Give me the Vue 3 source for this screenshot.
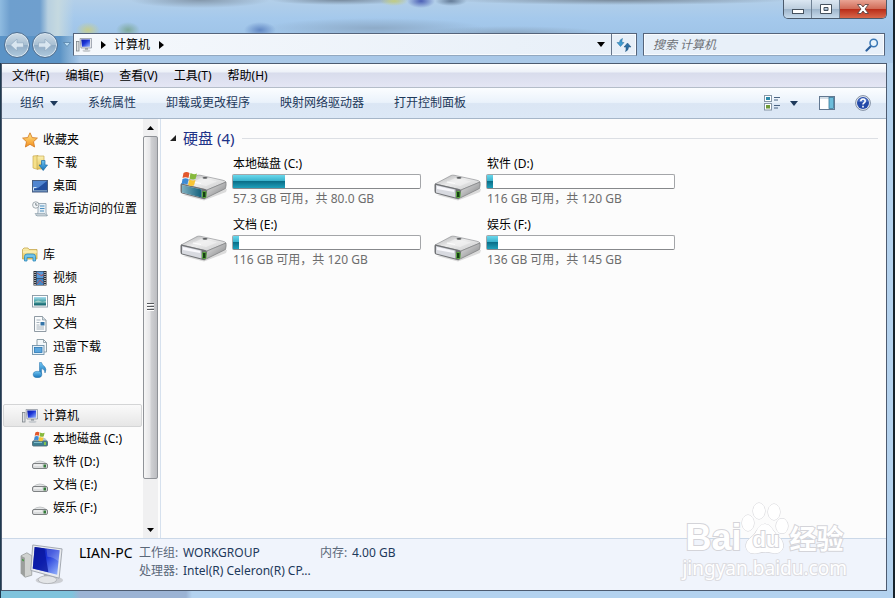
<script setup>
import { ref } from 'vue'

const search = ref('')
const selected = ref('计算机')
const open = ref(true)

const menus = ['文件(F)', '编辑(E)', '查看(V)', '工具(T)', '帮助(H)']
const actions = ['系统属性', '卸载或更改程序', '映射网络驱动器', '打开控制面板']

const groups = [
  {
    name: '收藏夹',
    icon: 'star',
    items: [
      { name: '下载', icon: 'download' },
      { name: '桌面', icon: 'desktop' },
      { name: '最近访问的位置', icon: 'recent' }
    ]
  },
  {
    name: '库',
    icon: 'library',
    items: [
      { name: '视频', icon: 'video' },
      { name: '图片', icon: 'picture' },
      { name: '文档', icon: 'document' },
      { name: '迅雷下载', icon: 'thunder' },
      { name: '音乐', icon: 'music' }
    ]
  },
  {
    name: '计算机',
    icon: 'computer',
    items: [
      { name: '本地磁盘 (C:)', icon: 'system' },
      { name: '软件 (D:)', icon: 'disk' },
      { name: '文档 (E:)', icon: 'disk' },
      { name: '娱乐 (F:)', icon: 'disk' }
    ]
  }
]

const drives = [
  { name: '本地磁盘 (C:)', info: '57.3 GB 可用，共 80.0 GB', used: 28, system: true },
  { name: '软件 (D:)', info: '116 GB 可用，共 120 GB', used: 3 },
  { name: '文档 (E:)', info: '116 GB 可用，共 120 GB', used: 3 },
  { name: '娱乐 (F:)', info: '136 GB 可用，共 145 GB', used: 6 }
]
</script>

<template>
  <div class="frame">
    <!-- shared icon shapes -->
    <svg class="defs" aria-hidden="true">
      <defs>
        <linearGradient id="gScreen" x1="0" y1="0" x2="1" y2="1">
          <stop offset="0" stop-color="#0a1a9c" />
          <stop offset=".45" stop-color="#1c35d8" />
          <stop offset="1" stop-color="#9dbcff" />
        </linearGradient>
        <linearGradient id="gTop" x1="0" y1="0" x2="1" y2="1">
          <stop offset="0" stop-color="#a9aaac" />
          <stop offset=".45" stop-color="#ececec" />
          <stop offset="1" stop-color="#c8c9ca" />
        </linearGradient>
        <linearGradient id="gSide" x1="0" y1="0" x2="1" y2="1">
          <stop offset="0" stop-color="#ececec" />
          <stop offset="1" stop-color="#7c7d7f" />
        </linearGradient>
        <linearGradient id="gTeal" x1="0" y1="0" x2="1" y2="0">
          <stop offset="0" stop-color="#7fb0c0" />
          <stop offset="1" stop-color="#14617c" />
        </linearGradient>
        <linearGradient id="gFolder" x1="0" y1="0" x2="0" y2="1">
          <stop offset="0" stop-color="#fbf0b0" />
          <stop offset="1" stop-color="#e2c35a" />
        </linearGradient>
        <linearGradient id="gBlue" x1="0" y1="0" x2="0" y2="1">
          <stop offset="0" stop-color="#6fc4f2" />
          <stop offset="1" stop-color="#1673b8" />
        </linearGradient>
        <linearGradient id="gStar" x1="0" y1="0" x2="0" y2="1">
          <stop offset="0" stop-color="#ffe98a" />
          <stop offset="1" stop-color="#f58e1c" />
        </linearGradient>
        <linearGradient id="gPhoto" x1="0" y1="0" x2="0" y2="1">
          <stop offset="0" stop-color="#a8dcf0" />
          <stop offset=".5" stop-color="#4aa5a8" />
          <stop offset="1" stop-color="#135f6a" />
        </linearGradient>
      </defs>
      <symbol id="flag" viewBox="0 0 16 16">
        <path d="M2 2Q5 0 8 2L7 7Q4 5.500 1 7Z" fill="#e2572b" />
        <path d="M9 2Q12 4 15.500 2.500L14 8Q11 9 8 7.500Z" fill="#86b93c" />
        <path d="M1 8Q4 6.500 7 8L6 13.500Q3 12 0 13.500Z" fill="#3d8bd4" />
        <path d="M8 8.500Q11 10 14 9L12.500 14.500Q9.500 15.500 6.500 14Z" fill="#f8c534" />
      </symbol>
      <symbol id="star" viewBox="0 0 16 16">
        <path d="M8 .8L10.200 5.600L15.400 6.100L11.500 9.700L12.600 15L8 12.300L3.400 15L4.500 9.700L.6 6.100L5.800 5.600Z" fill="url(#gStar)" stroke="#d6802a" stroke-width=".9" stroke-linejoin="round" />
      </symbol>
      <symbol id="download" viewBox="0 0 16 16">
        <path d="M1 1L6 .5V14.500L1 13Z" fill="#f5e08a" stroke="#c9a950" stroke-width=".7" />
        <path d="M5 1H12V14H5Z" fill="url(#gFolder)" stroke="#c9a950" stroke-width=".7" />
        <path d="M9.500 5.500H13V10H15.500L11.200 15.500L7 10H9.500Z" fill="url(#gBlue)" stroke="#1d6aa5" stroke-width=".7" />
      </symbol>
      <symbol id="desktop" viewBox="0 0 16 16">
        <rect x=".5" y="2.500" width="15" height="11.500" fill="#234f9e" stroke="#4a5f80" />
        <path d="M1 3H15L6 10L1 11Z" fill="#5c93dc" opacity=".8" />
        <rect x="1" y="12" width="14" height="1.500" fill="#7394bb" />
        <path d="M1.500 12.500V9.500H4.500" fill="none" stroke="#d2e7f8" />
      </symbol>
      <symbol id="recent" viewBox="0 0 16 16">
        <path d="M6 2.500H14V11Q14 13 15.500 14.500H4Q6 13 6 11Z" fill="#e6eff5" stroke="#8b9daa" stroke-width=".8" />
        <path d="M3 12.500H13L15 15H5Z" fill="#c4ced5" stroke="#8b9daa" stroke-width=".6" />
        <path d="M8 5H12.500M8 7.500H12.500M8 10H12" stroke="#4b8fc0" />
        <circle cx="3.800" cy="4" r="3.200" fill="#f3f6f8" stroke="#8c969c" stroke-width=".8" />
        <path d="M3.800 2V4.200H5.500" fill="none" stroke="#5e6b72" stroke-width=".8" />
      </symbol>
      <symbol id="library" viewBox="0 0 16 16">
        <path d="M.5 2.500L2 1H6L7 2.500H15V12H.5Z" fill="url(#gFolder)" stroke="#c5a54a" stroke-width=".8" />
        <path d="M1 5H15" stroke="#fff6c8" />
        <path d="M2.500 14V9.500Q2.500 7 5 7H11Q13.500 7 13.500 9.500V14H11V10.500H5V14Z" fill="#6fc3ea" stroke="#2e88b8" stroke-width=".8" />
      </symbol>
      <symbol id="video" viewBox="0 0 16 16">
        <rect x="1.500" y="1" width="13" height="14.500" fill="#2b2d33" />
        <rect x="4.500" y="1.500" width="7" height="6.500" fill="#5a9bdb" />
        <rect x="4.500" y="8.500" width="7" height="6.500" fill="#4687c6" />
        <path d="M5 3L10 6L11 4M5 14L8 10L11 13" stroke="#ae5a62" fill="none" />
        <path d="M3 2V15M13 2V15" stroke="#e8e8e8" stroke-width="1.300" stroke-dasharray="1 1" />
      </symbol>
      <symbol id="picture" viewBox="0 0 16 16">
        <rect x=".5" y="2.500" width="15" height="11.500" fill="#fff" stroke="#8797a3" stroke-width=".9" />
        <rect x="2" y="4" width="12" height="8.500" fill="url(#gPhoto)" />
        <path d="M2 9Q6 6.500 8 8T14 8V9.500H2Z" fill="#e3f1e1" opacity=".6" />
      </symbol>
      <symbol id="document" viewBox="0 0 16 16">
        <path d="M2.500 .5H10.500L14 4V15.500H2.500Z" fill="#fafcfd" stroke="#83909a" stroke-width=".9" />
        <path d="M10.500 .5V4H14" fill="#d4dde4" stroke="#83909a" stroke-width=".7" />
        <path d="M4.500 4H8.500M4.500 6.500H7.500M4.500 9H7.500M4.500 11H12M4.500 13H12" stroke="#9eacb6" stroke-width=".9" />
        <rect x="8.500" y="6" width="4" height="3.500" fill="#3474a8" />
      </symbol>
      <symbol id="thunder" viewBox="0 0 16 16">
        <path d="M5 .5H11.500L14.500 3.500V13H5Z" fill="#f4f8fa" stroke="#85969f" stroke-width=".9" />
        <path d="M11.500 .5V3.500H14.500" fill="none" stroke="#85969f" stroke-width=".8" />
        <rect x=".5" y="6.500" width="11.500" height="9" fill="#e6f1f8" stroke="#7192ab" stroke-width=".9" />
        <rect x="2.500" y="8.500" width="7.500" height="5" fill="#5aa6de" stroke="#2c78b3" stroke-width=".8" />
      </symbol>
      <symbol id="music" viewBox="0 0 16 16">
        <path d="M7.500 .5H9.500Q10 3 12.500 4.500Q15 7 13 11Q13 7 9.500 6.500V12H7.500Z" fill="url(#gBlue)" stroke="#246ea6" stroke-width=".5" />
        <ellipse cx="5.500" cy="12.500" rx="4.300" ry="3.200" fill="url(#gBlue)" stroke="#246ea6" stroke-width=".5" />
      </symbol>
      <symbol id="computer" viewBox="0 0 16 16">
        <rect x=".5" y="4.500" width="2.500" height="9.500" fill="#dfe2e4" stroke="#7d858b" stroke-width=".8" />
        <path d="M4 1.500H15.500V11H5Z" fill="#e4e6ea" stroke="#878e9a" stroke-width=".7" />
        <path d="M5.200 2.500H14V9.800H6Z" fill="url(#gScreen)" />
        <path d="M9 11H12V13H9Z" fill="#9aa0a6" />
        <ellipse cx="10.500" cy="13.800" rx="4" ry="1.200" fill="#c9cdd1" />
      </symbol>
      <symbol id="disk" viewBox="0 0 16 16">
        <path d="M1 10Q4 7 8 7T15 10Z" fill="#e3e5e6" stroke="#a8abad" stroke-width=".6" />
        <rect x=".5" y="9.500" width="15" height="5" rx="1.500" fill="#dadcdd" stroke="#737678" stroke-width=".9" />
        <path d="M2 11H10" stroke="#fff" />
        <rect x="11.500" y="10.500" width="2.500" height="3" fill="#347a3b" />
      </symbol>
      <symbol id="system" viewBox="0 0 16 16">
        <path d="M1 10L3 7H13L15.500 10Z" fill="#b9c8cf" />
        <rect x=".5" y="10" width="15" height="5" rx="1" fill="#3d7f91" stroke="#526e78" stroke-width=".9" />
        <path d="M2 11.500H10" stroke="#81bdcc" />
        <rect x="12" y="11" width="2" height="3" fill="#80c251" />
        <use href="#flag" x="2" y="0" width="11" height="11" />
      </symbol>
      <symbol id="drive" viewBox="0 0 48 28">
        <path d="M3 22L24 27.500L46 19L47 16Z" fill="#777" opacity=".25" />
        <path d="M1 11L17 2.500Q18 2 20 2.200L42 7Q45 7.500 46 9L27 17Z" fill="url(#gTop)" stroke="#85878a" stroke-width=".6" />
        <path d="M12 9.500L21 5L37 8.500L26 13Z" fill="#f3f3f3" opacity=".6" />
        <path d="M27 17L46 9Q46.500 12 45.500 15.500L24 26Z" fill="url(#gSide)" stroke="#707274" stroke-width=".6" />
        <path d="M1.500 10.500L25 16Q27.500 16.500 27 19L25.500 25Q25 26.500 23 26L2 20.500Q.5 20 .5 18V12Q.5 10.500 1.500 10.500Z" fill="#717376" />
        <path d="M2 12L21.500 16.500V24.500L2 19.500Z" fill="#d8dae0" />
        <path d="M3 13L20 17V19L3 16Z" fill="#f8f8fc" />
        <rect x="22.500" y="18.500" width="3.500" height="6" rx=".8" fill="#163f16" stroke="#5cae3e" stroke-width="1" />
        <ellipse cx="25" cy="4.800" rx="2.500" ry=".9" fill="#55585a" />
        <path d="M13 9L21 10.500" stroke="#fff" stroke-width=".8" />
      </symbol>
      <symbol id="front" viewBox="0 0 48 28">
        <path d="M2 12L21.500 16.500V24.500L2 19.500Z" fill="url(#gTeal)" />
      </symbol>
      <symbol id="pc" viewBox="0 0 48 44">
        <path d="M1 12L7 9L12 12V32L5 34L1 30Z" fill="#d0d2d0" stroke="#8e9291" stroke-width=".7" />
        <path d="M1 12L5 14V34L1 30Z" fill="#9c9f9d" />
        <path d="M2 15L4 16V18L2 17Z" fill="#4b9a48" />
        <ellipse cx="30" cy="37" rx="14" ry="4" fill="#999" opacity=".4" />
        <path d="M24 29L32 31V36H25Z" fill="#aeb2b6" />
        <ellipse cx="28" cy="36.500" rx="9.500" ry="4" fill="#e3e5e7" stroke="#a5a9ad" stroke-width=".7" />
        <path d="M13 1L43 5L40 35L11 27Z" fill="#e8eaee" stroke="#9ba1aa" stroke-width=".9" />
        <path d="M15 3L40.500 6.500L38 31.500L13 25Z" fill="url(#gScreen)" />
        <path d="M15 3L25 4.500L29 29L13 25Z" fill="#08159c" opacity=".75" />
        <path d="M27 5L40.500 6.500L39.500 18Q34 13 28 13Z" fill="#fff" opacity=".2" />
      </symbol>
    </svg>

    <header class="glass">
      <div class="titlebar">
        <div class="winbuttons">
          <button class="win" aria-label="最小化">
            <svg width="14" height="12" viewBox="0 0 14 12"><rect x="1.500" y="6.500" width="11" height="4" fill="#fff" stroke="#46525f" /></svg>
          </button>
          <button class="win" aria-label="最大化">
            <svg width="14" height="12" viewBox="0 0 14 12"><path d="M1.500 1.500H12.500V10.500H1.500ZM5 4.500V7.500H9V4.500Z" fill="#fff" fill-rule="evenodd" stroke="#46525f" /></svg>
          </button>
          <button class="win close" aria-label="关闭">
            <svg width="14" height="12" viewBox="0 0 14 12"><path d="M1.500 1.500H5L7 4L9 1.500H12.500L9 6L12.500 10.500H9L7 8L5 10.500H1.500L5 6Z" fill="#fff" stroke="#5c4444" stroke-width=".9" /></svg>
          </button>
        </div>
      </div>
      <div class="navrow">
        <div class="travel">
          <button class="round" aria-label="后退">
            <svg width="16" height="16" viewBox="0 0 16 16"><path d="M1.500 8L8 2V5.800H14.500V10.200H8V14Z" fill="#d9e6f0" stroke="#93acc3" stroke-width=".7" /></svg>
          </button>
          <button class="round" aria-label="前进">
            <svg width="16" height="16" viewBox="0 0 16 16"><path d="M14.500 8L8 2V5.800H1.500V10.200H8V14Z" fill="#d9e6f0" stroke="#93acc3" stroke-width=".7" /></svg>
          </button>
          <button class="recent-pages" aria-label="最近的页面">
            <svg width="8" height="5" viewBox="0 0 8 5"><path d="M.5 .5H7.500L4 4.500Z" fill="#b9dcf4" stroke="#5681a8" stroke-width=".8" /></svg>
          </button>
        </div>
        <div class="address">
          <svg class="i16"><use href="#computer" /></svg>
          <svg class="tri" viewBox="0 0 5 8"><path d="M0 0L5 4L0 8Z" /></svg>
          <button class="crumb">计算机</button>
          <svg class="tri" viewBox="0 0 5 8"><path d="M0 0L5 4L0 8Z" /></svg>
          <button class="drop" aria-label="以前的位置">
            <svg width="8" height="5" viewBox="0 0 8 5"><path d="M0 0H8L4 5Z" /></svg>
          </button>
          <button class="refresh" aria-label="刷新">
            <svg width="16" height="16" viewBox="0 0 16 16">
              <path d="M6.500 1.500Q3.500 2.500 3.500 5.500H1L4.500 9.500L8 5.500H6Q5.800 3 6.500 1.500Z" fill="#3f9bd0" stroke="#2a6e9c" stroke-width=".5" />
              <path d="M9.500 14.500Q12.500 13.500 12.500 10H15L11.500 6L8 10H10Q10.200 13 9.500 14.500Z" fill="#2e6fa3" stroke="#1d507c" stroke-width=".5" />
            </svg>
          </button>
        </div>
        <label class="search">
          <input v-model="search" type="text" placeholder="搜索 计算机" aria-label="搜索 计算机" />
          <svg width="14" height="14" viewBox="0 0 14 14">
            <path d="M1.500 12.500L6 8" stroke="#2b5f9c" stroke-width="2.200" stroke-linecap="round" />
            <circle cx="8.700" cy="5" r="3.700" fill="#e8f4fc" stroke="#3a78b5" stroke-width="1.500" />
          </svg>
        </label>
      </div>
    </header>

    <div class="window">
      <nav class="menubar">
        <button v-for="m in menus" :key="m">{{ m }}</button>
      </nav>

      <div class="toolbar">
        <button>组织 <svg width="8" height="5" viewBox="0 0 8 5"><path d="M0 0H8L4 5Z" /></svg></button>
        <button v-for="a in actions" :key="a">{{ a }}</button>
        <div class="tools">
          <button aria-label="更改您的视图">
            <svg width="16" height="16" viewBox="0 0 16 16">
              <rect x=".5" y=".5" width="7" height="6" fill="#fff" stroke="#8696a6" />
              <rect x="2" y="2" width="4" height="3" fill="#2e8bab" />
              <rect x=".5" y="8.500" width="7" height="6.500" fill="#fff" stroke="#8696a6" />
              <rect x="2" y="10" width="4" height="3.500" fill="#6f9a3a" />
              <path d="M10 2.500H16M10 5H14M10 10.500H16M10 13H14" stroke="#4b6483" />
            </svg>
          </button>
          <button class="viewdrop" aria-label="更多选项"><svg width="8" height="5" viewBox="0 0 8 5"><path d="M0 0H8L4 5Z" /></svg></button>
          <button class="pane" aria-label="显示预览窗格">
            <svg width="16" height="14" viewBox="0 0 16 14">
              <rect x=".5" y=".5" width="15" height="13" fill="#fff" stroke="#627891" />
              <path d="M1 2H15" stroke="#a9bccd" />
              <rect x="10" y="1.500" width="4.500" height="11" fill="#6dbddb" stroke="#39789a" stroke-width=".8" />
            </svg>
          </button>
          <button aria-label="获取帮助">
            <svg width="16" height="16" viewBox="0 0 16 16">
              <circle cx="8" cy="8" r="7.400" fill="#e5eaf2" stroke="#76849a" stroke-width=".9" />
              <circle cx="8" cy="8" r="6" fill="#2349a8" />
              <path d="M3 6.500Q4 3 8 3T13 6.500Q8 8 3 6.500" fill="#6c8fd8" opacity=".6" />
              <path d="M5.800 6.300Q5.800 4 8 4T10.200 6.100Q10.200 7.300 8.900 8Q8 8.500 8 9.600M8 10.800V12.400" fill="none" stroke="#fff" stroke-width="1.600" />
            </svg>
          </button>
        </div>
      </div>

      <div class="content">
        <aside class="sidebar">
          <div class="tree">
            <ul v-for="g in groups" :key="g.name">
              <li>
                <button class="node" :class="{ selected: selected === g.name }" @click="selected = g.name">
                  <svg class="i16"><use :href="'#' + g.icon" /></svg>{{ g.name }}
                </button>
              </li>
              <li v-for="item in g.items" :key="item.name">
                <button class="node child" :class="{ selected: selected === item.name }" @click="selected = item.name">
                  <svg class="i16"><use :href="'#' + item.icon" /></svg>{{ item.name }}
                </button>
              </li>
            </ul>
          </div>
          <div class="scrollbar">
            <button aria-label="向上滚动"><svg width="7" height="4" viewBox="0 0 7 4"><path d="M0 4H7L3.500 0Z" /></svg></button>
            <div class="track">
              <div class="thumb"><i></i><i></i><i></i></div>
            </div>
            <button aria-label="向下滚动"><svg width="7" height="4" viewBox="0 0 7 4"><path d="M0 0H7L3.500 4Z" /></svg></button>
          </div>
        </aside>

        <main class="main">
          <h2>
            <button @click="open = !open">
              <svg width="6" height="6" viewBox="0 0 6 6"><path d="M6 0V6H0Z" fill="#222" /></svg>
              硬盘 (4)
            </button>
          </h2>
          <ul v-if="open" class="drives">
            <li v-for="d in drives" :key="d.name">
              <div class="picture">
                <svg class="drive"><use href="#drive" /><use v-if="d.system" href="#front" /></svg>
                <svg v-if="d.system" class="flag"><use href="#flag" /></svg>
              </div>
              <div class="text">
                <div class="name">{{ d.name }}</div>
                <div class="bar" role="meter" :aria-label="d.name" :aria-valuenow="d.used" aria-valuemin="0" aria-valuemax="100">
                  <div class="fill" :style="{ width: d.used + '%' }"></div>
                </div>
                <div class="info">{{ d.info }}</div>
              </div>
            </li>
          </ul>
        </main>
      </div>

      <footer class="details">
        <svg class="pc"><use href="#pc" /></svg>
        <strong>LIAN-PC</strong>
        <dl>
          <dt>工作组:</dt>
          <dd>WORKGROUP</dd>
          <dt>内存:</dt>
          <dd>4.00 GB</dd>
          <dt>处理器:</dt>
          <dd>Intel(R) Celeron(R) CP...</dd>
        </dl>
      </footer>
    </div>

    <div class="watermark">
      <div class="brand">
        <span class="bai">Bai</span>
        <span class="paw">
          <svg viewBox="0 0 48 54">
            <g fill="#fff" stroke="#d0d0d5">
              <ellipse cx="7" cy="21" rx="6" ry="8" />
              <ellipse cx="18" cy="9" rx="6" ry="8" />
              <ellipse cx="33" cy="10" rx="6" ry="8" />
              <ellipse cx="41" cy="24" rx="6" ry="7.500" />
              <path d="M24 22Q29 22 32 28Q35 33 40 37Q44 43 41 48Q38 52 32 51Q24 49 17 51Q9 53 6 48Q3 42 8 37Q14 33 16 28Q19 22 24 22Z" />
            </g>
          </svg>
          <span class="du">du</span>
        </span>
        <span class="jing">经验</span>
      </div>
      <div class="site">jingyan.baidu.com</div>
    </div>
  </div>
</template>

<style>
body {
  margin: 0;
}
</style>

<style scoped>
.frame {
  position: relative;
  box-sizing: border-box;
  min-height: 100vh;
  display: flex;
  flex-direction: column;
  padding: 0 8px 7px 1px;
  font: 12px/18px "Noto Sans", "Noto Sans CJK SC", sans-serif;
  color: #000;
  background:
    linear-gradient(90deg, transparent calc(100% - 2px), #17232c 0),
    linear-gradient(90deg, #1f3a50 1px, transparent 0),
    linear-gradient(90deg, #7fc3dc 72px, #9bb3d4 80px, #9bb3d4 186px, #b3d2ef 192px) bottom / 100% 7px no-repeat,
    #b4d2ee;
}
.defs {
  position: absolute;
  width: 0;
  height: 0;
}
button {
  margin: 0;
  padding: 0;
  border: 0;
  background: none;
  font: inherit;
  color: inherit;
  display: flex;
  align-items: center;
  white-space: nowrap;
}
svg {
  flex: none;
  display: block;
}
ul,
dl,
dd,
h2 {
  margin: 0;
  padding: 0;
  list-style: none;
}
.i16 {
  width: 16px;
  height: 16px;
}

/* glass title area */
.glass {
  margin: 0 -6px 0 -1px;
  background:
    radial-gradient(ellipse 14px 5px at 394px 1px, #c2cc83, transparent),
    radial-gradient(ellipse 14px 7px at 421px 1px, #4b5fb5, transparent),
    radial-gradient(ellipse 16px 5px at 451px 1px, #627a96, transparent),
    radial-gradient(ellipse 70px 5px at 340px 0, #778a9d, transparent),
    radial-gradient(ellipse 170px 5px at 620px 0, #78899a, transparent),
    radial-gradient(ellipse 70px 8px at 200px 0, #8498ac, transparent),
    radial-gradient(ellipse 12px 8px at 88px 30px, #c5cd8e, transparent),
    radial-gradient(ellipse 12px 8px at 128px 30px, #7faa9c, transparent),
    radial-gradient(ellipse 16px 8px at 260px 30px, #6288c4, transparent),
    radial-gradient(ellipse 110px 10px at 375px 28px, #8eabc8, transparent),
    radial-gradient(ellipse 100px 8px at 510px 34px, #8ba5bf, transparent),
    linear-gradient(90deg, #5b93c6 60px, transparent 80px) 0 36px / 100% 28px no-repeat,
    linear-gradient(90deg, #8fbbe0, #6e9fce 10px, #6f9fce 40px, #b8d0e0 48px, #c5d9e0 58px, transparent 74px),
    linear-gradient(180deg, #b3cfe9, #a5c9ec 18px, #9fc4e8 36px, #abc9e8);
}
.titlebar {
  display: flex;
  justify-content: flex-end;
  height: 28px;
  padding-right: 6px;
}
.winbuttons {
  display: flex;
  height: 18px;
  border: 1px solid #4b5a6c;
  border-top: 0;
  border-radius: 0 0 5px 5px;
  overflow: hidden;
}
.win {
  width: 28px;
  justify-content: center;
  border-right: 1px solid #6f8194;
  background: linear-gradient(#dbe7f2, #bdcede 48%, #9eb5cb 52%, #c8dbec);
}
.win.close {
  width: 46px;
  border-right: 0;
  background: linear-gradient(#e9a494, #d16c58 48%, #b92d19 52%, #d9674a);
}
.navrow {
  display: flex;
  align-items: center;
  height: 35px;
  padding: 0 8px 2px 4px;
  box-sizing: border-box;
}
.travel {
  flex: none;
  display: flex;
  align-items: center;
  gap: 2px;
  width: 69px;
}
.round {
  width: 26px;
  height: 26px;
  justify-content: center;
  border: 1px solid #506f90;
  border-radius: 50%;
  background: linear-gradient(#cfdce6, #a9c0d3 48%, #90acc5 52%, #b0cade);
  box-shadow: inset 0 0 0 1px #dbe8f2;
}
.recent-pages {
  margin-left: 3px;
}
.address,
.search {
  display: flex;
  align-items: center;
  box-sizing: border-box;
  height: 23px;
  border: 1px solid #55647b;
  border-bottom-color: #92a8c0;
  box-shadow: inset 0 0 0 1px #f8fbfe;
  background: #e8f0f9;
}
.address {
  flex: 1;
  background: linear-gradient(90deg, #f5f8fc, #e7eff8);
}
.address > .i16 {
  margin-left: 2px;
}
.tri {
  width: 5px;
  height: 8px;
  margin: 0 8px 0 9px;
}
.crumb {
  height: 21px;
}
.drop {
  margin-left: auto;
  padding: 0 6px;
  height: 21px;
}
.refresh {
  width: 25px;
  height: 21px;
  justify-content: center;
  border-left: 1px solid #66758a;
}
.search {
  flex: none;
  width: 242px;
  margin-left: 6px;
  padding: 0 5px 0 9px;
}
.search input {
  flex: 1;
  min-width: 0;
  padding: 0;
  border: 0;
  outline: 0;
  background: none;
  font: inherit;
}
.search input::placeholder {
  color: #6f7278;
  font-style: italic;
  opacity: 1;
}

/* window body */
.window {
  flex: 1;
  display: flex;
  flex-direction: column;
  border: 1px solid #4d5b70;
  background: #fcfcfc;
}
.menubar {
  display: flex;
  gap: 16px;
  height: 23px;
  padding: 0 10px;
  border-bottom: 1px solid #b4bdc9;
  background: linear-gradient(#fdfeff, #edf1f8 8px, #d8dcec 9px, #e4e6f4);
}
.toolbar {
  display: flex;
  align-items: center;
  gap: 30px;
  height: 31px;
  padding: 0 15px 0 18px;
  border-bottom: 1px solid #a6b6c8;
  box-sizing: border-box;
  color: #1e395b;
  background: linear-gradient(#fbfdff, #eaf2fb 48%, #dbe6f4 52%, #dce8f6);
}
.toolbar > button {
  gap: 6px;
}
.toolbar svg {
  fill: #1e395b;
}
.tools {
  margin-left: auto;
  display: flex;
  align-items: center;
}
.viewdrop {
  margin: 0 21px 0 10px;
}
.pane {
  margin-right: 20px;
}
.content {
  flex: 1;
  display: flex;
}
.sidebar {
  flex: none;
  display: flex;
  width: 158px;
  border-right: 1px solid #d6e1ee;
}
.tree {
  flex: 1;
  padding: 9px 1px 14px 1px;
}
.tree ul + ul {
  margin-top: 23px;
}
.node {
  box-sizing: border-box;
  width: 100%;
  height: 23px;
  gap: 5px;
  padding-left: 18px;
  border: 1px solid transparent;
  border-radius: 2px;
}
.node.child {
  padding-left: 28px;
}
.node.selected {
  border-color: #d4d5d6;
  background: linear-gradient(#fafafa, #e6e6e6);
}
.scrollbar {
  flex: none;
  display: flex;
  flex-direction: column;
  width: 15px;
  margin-right: 2px;
  background: #f0f0f1;
}
.scrollbar button {
  height: 17px;
  justify-content: center;
  color: #333;
}
.track {
  flex: 1;
}
.thumb {
  display: flex;
  flex-direction: column;
  align-items: center;
  justify-content: center;
  gap: 1px;
  box-sizing: border-box;
  height: 89%;
  border: 1px solid #909398;
  border-radius: 2px;
  background: linear-gradient(90deg, #f6f6f6, #e6e6e8 45%, #cfd0d3 55%, #bcbdc1);
}
.thumb i {
  width: 7px;
  height: 1px;
  border-bottom: 1px solid #fff;
  background: #55585c;
}
.main {
  flex: 1;
  min-width: 0;
  padding: 9px 8px 0 9px;
}
.main h2 {
  display: flex;
  align-items: center;
  gap: 8px;
  font-size: 15px;
  font-weight: normal;
  line-height: 20px;
  color: #1e3287;
}
.main h2 button {
  gap: 7px;
}
.main h2::after {
  content: "";
  flex: 1;
  border-top: 1px solid #dcdfe4;
}
.drives {
  display: grid;
  grid-template-columns: repeat(auto-fill, 244px);
  gap: 6px 10px;
  padding: 6px 0 0 10px;
}
.drives li {
  display: flex;
  gap: 4px;
}
.picture {
  position: relative;
  flex: none;
  width: 48px;
  padding-top: 19px;
}
.drive {
  width: 48px;
  height: 28px;
}
.flag {
  position: absolute;
  left: 1px;
  top: 17px;
  width: 17px;
  height: 16px;
}
.text {
  flex: 1;
}
.bar {
  box-sizing: border-box;
  width: 189px;
  height: 15px;
  margin: 1px 0 0;
  border: 1px solid #a4a6a9;
  border-bottom-color: #87898c;
  border-radius: 2px;
  background: #fff;
}
.fill {
  height: 100%;
  background: linear-gradient(#6ad8ec, #39b2cc 45%, #0b6f89 50%, #1fa0bb);
}
.name,
.info {
  height: 19px;
  line-height: 19px;
  padding-left: 1px;
}
.info {
  height: 20px;
  color: #6d6d6d;
}
.details {
  display: flex;
  align-items: flex-start;
  height: 52px;
  padding: 5px 0 0 18px;
  border-top: 1px solid #cbd8e8;
  box-sizing: border-box;
  background: #f0f4fc;
}
.pc {
  width: 47px;
  height: 43px;
}
.details strong {
  margin-left: 12px;
  width: 60px;
  font-size: 14px;
  font-weight: normal;
}
.details dl {
  display: grid;
  grid-template-columns: 44px 137px 32px auto;
}
.details dt {
  color: #5a6779;
}
.details dd {
  color: #1e395b;
  white-space: nowrap;
}

/* watermark lies over the window */
.watermark {
  position: absolute;
  right: 48px;
  bottom: 18px;
  color: #fff;
  pointer-events: none;
  font-family: "Liberation Sans", "Noto Sans CJK SC", sans-serif;
  paint-order: stroke fill;
  -webkit-text-stroke: 2px #d4d4d9;
}
.brand {
  display: flex;
  align-items: flex-end;
  height: 54px;
  padding-left: 3px;
}
.bai {
  font-size: 36px;
  line-height: 36px;
  font-weight: bold;
}
.paw {
  position: relative;
  width: 48px;
}
.paw svg {
  width: 48px;
  height: 54px;
}
.du {
  position: absolute;
  left: 11px;
  bottom: 4px;
  font-size: 22px;
  line-height: 24px;
  font-weight: bold;
}
.jing {
  font-size: 27px;
  line-height: 32px;
  font-weight: bold;
}
.site {
  font-family: "Noto Sans", sans-serif;
  font-size: 19px;
  line-height: 24px;
  -webkit-text-stroke: 2px #dcdce1;
}
</style>
